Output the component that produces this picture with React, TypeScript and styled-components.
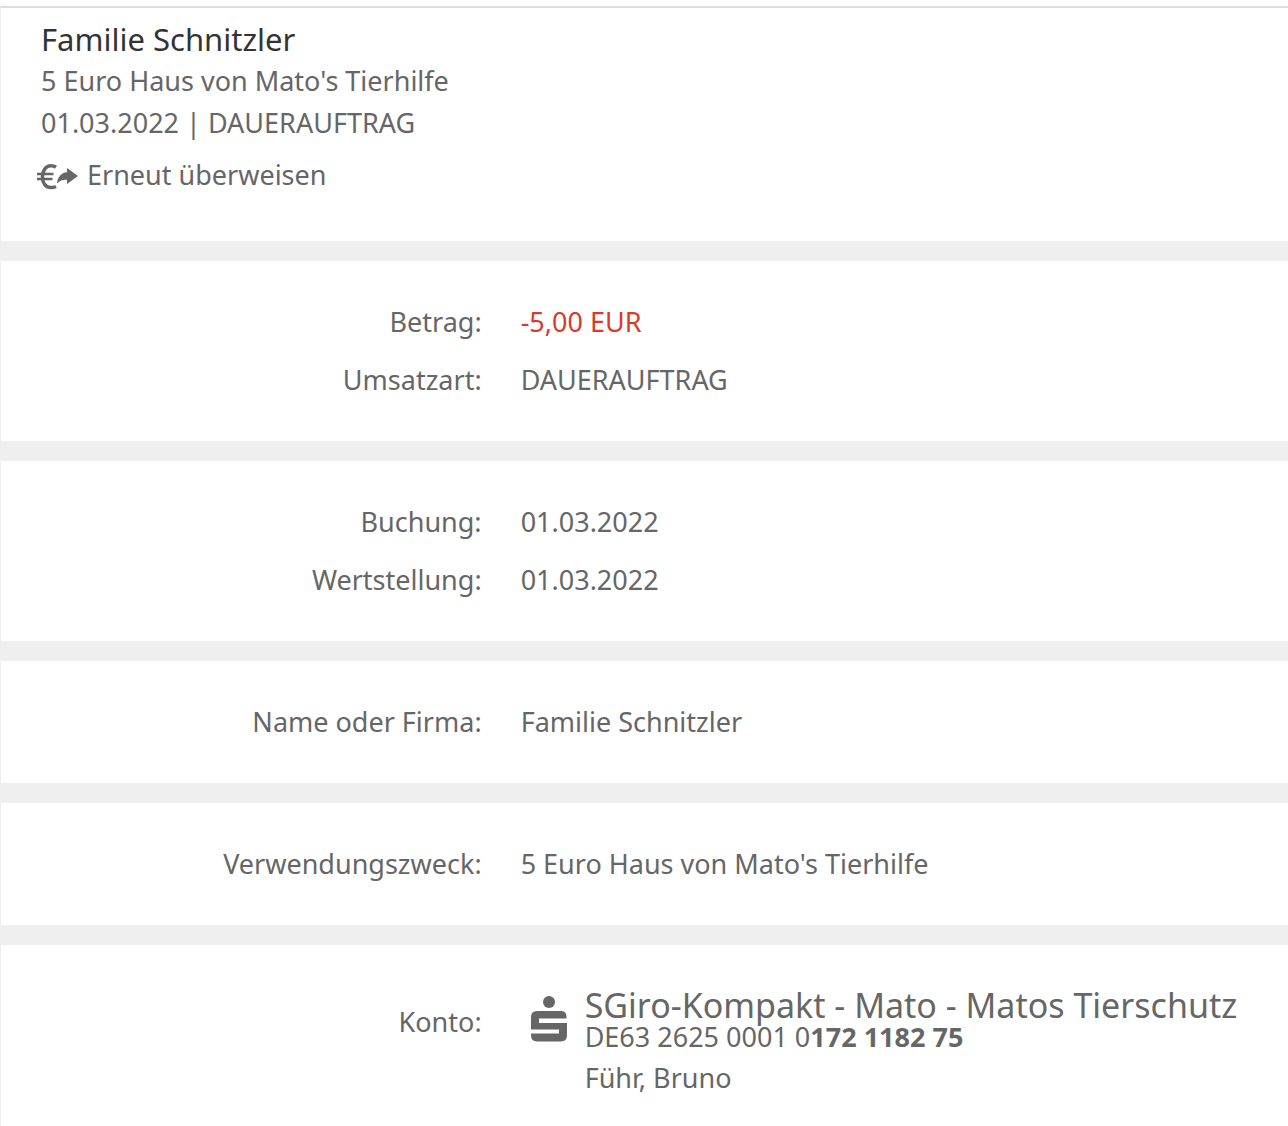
import React from "react";
import styled, { createGlobalStyle } from "styled-components";

const GlobalStyle = createGlobalStyle`
  * {
    box-sizing: border-box;
  }
  body {
    margin: 0;
    background: #ffffff;
    color: #666666;
    font-family: "Noto Sans", "Open Sans", sans-serif;
    font-size: 27px;
    line-height: 42px;
  }
`;

const Page = styled.main`
  margin-top: 6px;
  border-top: 2px solid #dddddd;
  border-left: 1px solid #eeeeee;
`;

const Header = styled.header`
  padding: 10px 40px 45px;
`;

const Title = styled.h1`
  margin: 0;
  color: #333333;
  font-size: 31px;
  font-weight: 400;
  line-height: 42px;
`;

const Line = styled.p`
  margin: 0;
`;

const TransferButton = styled.button`
  display: flex;
  align-items: center;
  gap: 8px;
  margin: 10px 0 0 -4px;
  padding: 0;
  border: 0;
  background: none;
  color: inherit;
  font: inherit;
  cursor: pointer;
`;

const Section = styled.dl`
  display: flex;
  flex-direction: column;
  gap: 16px;
  margin: 0;
  padding: 40px 0;
  border-top: 20px solid #efefef;
`;

const Row = styled.div`
  display: grid;
  grid-template-columns: 3fr 5fr;
  align-items: start;
`;

const Label = styled.dt<{ $lowered?: boolean }>`
  padding-top: ${({ $lowered }) => ($lowered ? 16 : 0)}px;
  padding-right: 2px;
  text-align: right;
`;

const Value = styled.dd<{ $negative?: boolean }>`
  margin: 0;
  padding-left: 37px;
  color: ${({ $negative }) => ($negative ? "#d93a2b" : "inherit")};
  white-space: nowrap;
`;

const Account = styled.div`
  display: flex;
  gap: 18px;
  padding-left: 10px;
`;

const BankLogo = styled.svg`
  flex: none;
  margin-top: 11px;
`;

const AccountName = styled.p`
  margin: 0;
  font-size: 34px;
  line-height: 40px;
`;

const Iban = styled.p`
  margin: 0;
  line-height: 24px;
`;

const Owner = styled.p`
  margin: 8px 0 0;
`;

const TransferIcon = () => (
  <svg width="42" height="32" viewBox="0 -5 42 32" fill="none" aria-hidden="true">
    <path
      d="M19 3.200C17.500 2.200 16 1.800 14 1.800C8.700 1.800 5.500 6.500 5.500 12.800C5.500 19.300 8.700 23.500 14 23.500C15.800 23.500 17.500 23.200 19 22.500"
      stroke="currentColor"
      strokeWidth="3.500"
    />
    <path d="M0 10H16.500M0 15H15.500" stroke="currentColor" strokeWidth="2.300" />
    <path
      d="M20 19.500C20.500 13.500 24 8.700 30 8.300V4L41 12L30 20V15.800C26 15.200 22.800 16.500 20 19.500Z"
      fill="currentColor"
    />
  </svg>
);

const SparkasseLogo = () => (
  <BankLogo width="36" height="46" viewBox="0 0 36 46" fill="currentColor" aria-hidden="true">
    <circle cx="18" cy="6" r="6" />
    <path d="M6 15H30Q35 15 35.500 20V22.500H8V27H36V39Q36 45.500 30 45.500H6Q0 45.500 0 39V37.500H28V33.500H0V21Q0 15 6 15Z" />
  </BankLogo>
);

export default function App() {
  return (
    <>
      <GlobalStyle />
      <Page>
        <Header>
          <Title>Familie Schnitzler</Title>
          <Line>5 Euro Haus von Mato's Tierhilfe</Line>
          <Line>01.03.2022 | DAUERAUFTRAG</Line>
          <TransferButton type="button">
            <TransferIcon />
            Erneut überweisen
          </TransferButton>
        </Header>
        <Section>
          <Row>
            <Label>Betrag:</Label>
            <Value $negative>-5,00 EUR</Value>
          </Row>
          <Row>
            <Label>Umsatzart:</Label>
            <Value>DAUERAUFTRAG</Value>
          </Row>
        </Section>
        <Section>
          <Row>
            <Label>Buchung:</Label>
            <Value>01.03.2022</Value>
          </Row>
          <Row>
            <Label>Wertstellung:</Label>
            <Value>01.03.2022</Value>
          </Row>
        </Section>
        <Section>
          <Row>
            <Label>Name oder Firma:</Label>
            <Value>Familie Schnitzler</Value>
          </Row>
        </Section>
        <Section>
          <Row>
            <Label>Verwendungszweck:</Label>
            <Value>5 Euro Haus von Mato's Tierhilfe</Value>
          </Row>
        </Section>
        <Section>
          <Row>
            <Label $lowered>Konto:</Label>
            <Value>
              <Account>
                <SparkasseLogo />
                <div>
                  <AccountName>SGiro-Kompakt - Mato - Matos Tierschutz</AccountName>
                  <Iban>
                    DE63 2625 0001 0<b>172 1182 75</b>
                  </Iban>
                  <Owner>Führ, Bruno</Owner>
                </div>
              </Account>
            </Value>
          </Row>
        </Section>
      </Page>
    </>
  );
}
